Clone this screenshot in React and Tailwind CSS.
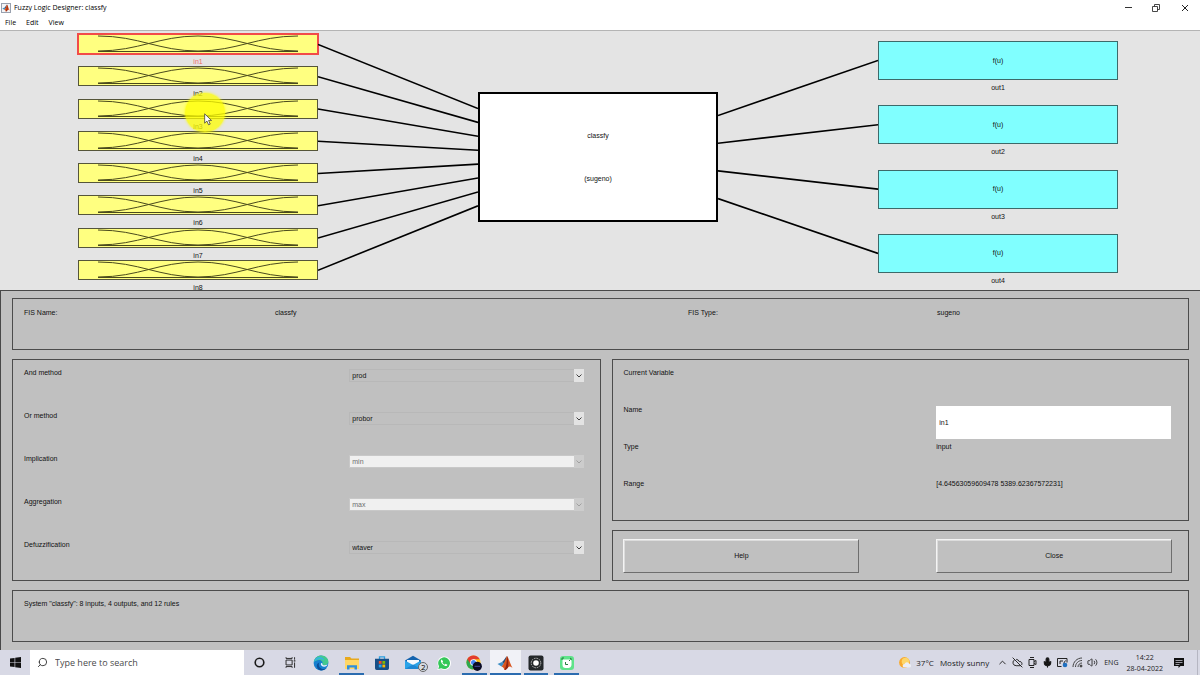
import { useState } from "react"
import { ChevronUp, CloudOff, Mic, Volume2, Search } from "lucide-react"

const INPUTS = ["in1", "in2", "in3", "in4", "in5", "in6", "in7", "in8"]
const OUTPUTS = ["out1", "out2", "out3", "out4"]

const METHODS = [
  { label: "And method", id: "and", options: ["prod", "min"] },
  { label: "Or method", id: "or", options: ["probor", "max"] },
  { label: "Implication", id: "implication", options: ["min"], disabled: true },
  { label: "Aggregation", id: "aggregation", options: ["max"], disabled: true },
  { label: "Defuzzification", id: "defuzz", options: ["wtaver", "wtsum"] },
]

function MatlabLogo({ className }) {
  return (
    <svg viewBox="0 0 32 32" className={className} aria-hidden="true">
      <path d="M1 18 L10 14 L14 17 L9 23 Z" fill="#3f8fc4" />
      <path d="M10 14 C14 12 16 5 20 2 C18 10 16 18 9 23 L14 17 Z" fill="#244f7c" />
      <path d="M20 2 C24 7 26 18 31 26 C27 23 25 22 22 25 C19 29 17 30 15 30 C14 26 12 24 9 23 C15 18 17 8 20 2 Z" fill="#d9541e" />
      <path d="M20 2 C23 8 23 18 22 25 C19 29 17 30 15 30 C19 22 20 12 20 2 Z" fill="#8f2413" />
    </svg>
  )
}

function TitleBar() {
  return (
    <header className="bg-white font-['Open_Sans','Noto_Sans',sans-serif] text-black">
      <div className="flex h-[15px] items-center">
        <div className="ml-px flex h-[10px] w-[10px] items-center justify-center border border-gray-400 bg-gray-100">
          <MatlabLogo className="h-2 w-2" />
        </div>
        <h1 className="ml-[3px] flex-1 text-[7px] leading-[10px]">Fuzzy Logic Designer: classfy</h1>
        <button type="button" aria-label="Minimize" className="flex w-7 justify-center">
          <svg viewBox="0 0 8 8" className="h-2 w-2" stroke="#333" fill="none">
            <path d="M1 3.5h7" />
          </svg>
        </button>
        <button type="button" aria-label="Restore" className="flex w-7 justify-center">
          <svg viewBox="0 0 8 8" className="h-2 w-2" stroke="#333" fill="none" strokeWidth=".9">
            <path d="M.5 2.500h5v5h-5z M2.500 2.500v-2h5v5h-2" />
          </svg>
        </button>
        <button type="button" aria-label="Close window" className="flex w-[30px] justify-center">
          <svg viewBox="0 0 8 8" className="h-2 w-2" stroke="#222" fill="none">
            <path d="M1 1l6 6M7 1l-6 6" />
          </svg>
        </button>
      </div>
      <nav className="flex h-4 items-center gap-[10px] border-b border-[#b4b4b4] pl-[5px] text-[7px] leading-[10px]">
        <button type="button">File</button>
        <button type="button">Edit</button>
        <button type="button">View</button>
      </nav>
    </header>
  )
}

function InputNode({ name, selected, onSelect }) {
  return (
    <button type="button" onClick={onSelect} className="flex flex-col">
      <span
        className={
          selected
            ? "block h-5 w-full border border-[#f24b48] bg-[#ffff80] outline outline-[#f24b48]"
            : "block h-5 w-full border border-[#55553a] bg-[#ffff80]"
        }
      >
        <svg viewBox="0 0 238 18" preserveAspectRatio="none" className="block h-full w-full" fill="none" stroke="#4a4a1c">
          <path d="M19 1 C60 1 80 16 119 16 C158 16 178 1 219 1" vectorEffect="non-scaling-stroke" />
          <path d="M19 16 C60 16 80 1 119 1 C158 1 178 16 219 16" vectorEffect="non-scaling-stroke" />
          <path d="M19 16.5H219" vectorEffect="non-scaling-stroke" />
        </svg>
      </span>
      <span className={selected ? "mt-1 w-full text-center leading-2 text-[#ee6a6a]" : "mt-1 w-full text-center leading-2"}>
        {name}
      </span>
    </button>
  )
}

function OutputNode({ name }) {
  return (
    <div className="flex flex-col text-center">
      <div className="flex h-[39px] items-center justify-center border border-[#3c6a6a] bg-[#80ffff]">f(u)</div>
      <div className="mt-1 leading-2">{name}</div>
    </div>
  )
}

// Lines that join the variable boxes to the rule block
function Edges({ lines }) {
  return (
    <svg viewBox="0 0 160 259" preserveAspectRatio="none" className="h-[259px] w-full" stroke="#000" strokeWidth="1.6">
      {lines.map(([from, to]) => (
        <line key={`${from}-${to}`} x1="0" y1={from} x2="160" y2={to} vectorEffect="non-scaling-stroke" />
      ))}
    </svg>
  )
}

function Diagram({ names, current, onSelect }) {
  const left = INPUTS.map((_, i) => [13.5 + i * 32.25, 77.5 + i * 13.9])
  const right = OUTPUTS.map((_, i) => [84.5 + i * 27.7, 29.5 + i * 64.3])

  return (
    <section className="relative grid h-[259px] grid-cols-[78fr_240fr_160fr_240fr_160fr_240fr_82fr] overflow-hidden bg-[#e4e4e4] text-[7px] leading-2">
      <div className="col-start-2 mt-[3px] grid h-[258px] grid-rows-8">
        {names.map((name, i) => (
          <InputNode key={INPUTS[i]} name={name} selected={i === current} onSelect={() => onSelect(i)} />
        ))}
      </div>
      <Edges lines={left} />
      <div className="mt-[61px] flex h-[130px] flex-col items-center justify-center gap-[35px] border-2 border-black bg-white">
        <span>classfy</span>
        <span>(sugeno)</span>
      </div>
      <Edges lines={right} />
      <div className="mt-[10px] grid h-[257px] grid-rows-4">
        {OUTPUTS.map((name) => (
          <OutputNode key={name} name={name} />
        ))}
      </div>
      {/* Pointer highlight */}
      <div className="pointer-events-none absolute top-[62px] left-[185px] h-[39px] w-10 rounded-full bg-[#ffff00]/75 shadow-[0_0_3px_#ffff00]" />
      <svg viewBox="0 0 12 19" className="pointer-events-none absolute top-[82px] left-[204px] h-[13px] w-2">
        <path d="M1 1v14l3.400-3.200 2.400 5.600 2.500-1-2.400-5.500h4.400z" fill="#fff" stroke="#222" />
      </svg>
    </section>
  )
}

function MethodSelect({ id, options, disabled }) {
  return (
    <div className="relative mt-[9px] h-[13px]">
      <select
        id={id}
        disabled={disabled}
        className={
          disabled
            ? "block h-[13px] w-full appearance-none border border-[#c8c8c8] bg-[#f0f0f0] pl-[2px] leading-[11px] text-[#6d6d6d] opacity-100"
            : "block h-[13px] w-full appearance-none border border-[#b8b8b8] bg-[#c0c0c0] pl-[2px] leading-[11px]"
        }
      >
        {options.map((option) => (
          <option key={option}>{option}</option>
        ))}
      </select>
      <span
        className={
          disabled
            ? "pointer-events-none absolute top-0 right-0 flex h-[13px] w-[10px] items-center justify-center bg-[#cccccc] text-[#a0a0a0]"
            : "pointer-events-none absolute top-0 right-0 flex h-[13px] w-[10px] items-center justify-center bg-[#e3e3e3] text-[#404040]"
        }
      >
        <svg viewBox="0 0 6 4" className="h-1 w-[6px]" fill="none" stroke="currentColor">
          <path d="M.5 .5L3 3L5.500 .5" />
        </svg>
      </span>
    </div>
  )
}

function Panel({ className, children }) {
  return <section className={`border border-[#4c4c4c] ${className}`}>{children}</section>
}

const PUSH_BUTTON =
  "h-[34px] border border-t-[#f4f4f4] border-l-[#f4f4f4] border-r-[#6e6e6e] border-b-[#6e6e6e] text-center shadow-[inset_1px_1px_0_#dcdcdc]"

function Controls({ currentName, onRename }) {
  return (
    <main className="flex flex-1 flex-col gap-[9px] border-t border-l border-[#484848] bg-[#c0c0c0] pt-[7px] pr-[11px] pb-2 pl-[11px] text-[7px] leading-2">
      <Panel className="grid min-h-[52px] grid-cols-[251fr_413fr_249fr_240fr] pt-[10px] pr-[11px] pl-[11px]">
        <span>FIS Name:</span>
        <span>classfy</span>
        <span>FIS Type:</span>
        <span>sugeno</span>
      </Panel>

      <div className="grid grid-cols-[590fr_577fr] gap-[11px]">
        <Panel className="grid min-h-[222px] auto-rows-[43px] grid-cols-[325fr_235fr] pr-4 pl-[11px]">
          {METHODS.map((method) => (
            <div key={method.id} className="contents">
              <label htmlFor={method.id} className="pt-[9px]">
                {method.label}
              </label>
              <MethodSelect {...method} />
            </div>
          ))}
        </Panel>

        <div className="flex flex-col gap-[9px]">
          <Panel className="grid flex-1 auto-rows-[37px] grid-cols-[313fr_235fr] pt-[9px] pr-[17px] pl-[10px]">
            <h2 className="col-span-2">Current Variable</h2>
            <label htmlFor="var-name">Name</label>
            <input
              id="var-name"
              type="text"
              value={currentName}
              onChange={(e) => onRename(e.target.value)}
              className="h-[33px] w-full bg-white px-[3px]"
            />
            <span>Type</span>
            <span>input</span>
            <span>Range</span>
            <span>[4.64563059609478 5389.62367572231]</span>
          </Panel>
          <Panel className="grid min-h-[51px] grid-cols-[236fr_77fr_236fr] items-center pr-4 pl-[10px]">
            <button type="button" className={PUSH_BUTTON}>
              Help
            </button>
            <button type="button" className={`col-start-3 ${PUSH_BUTTON}`}>
              Close
            </button>
          </Panel>
        </div>
      </div>

      <Panel className="min-h-[52px] pt-[9px] pl-[11px]">
        <p role="status">System "classfy": 8 inputs, 4 outputs, and 12 rules</p>
      </Panel>
    </main>
  )
}

const APPS = [
  {
    name: "Cortana",
    icon: <circle cx="8" cy="8" r="5.3" fill="none" stroke="#1a1a1a" strokeWidth="2" />,
  },
  {
    name: "Task view",
    icon: (
      <g fill="none" stroke="#2a2a2a" strokeWidth="1.2">
        <path d="M2.500 5h7.500v6h-7.500z M2.500 1.500v1.500h7.500V1.500 M2.500 14.500V13h7.500v1.500 M13 1.500v3 M13 8v6.500" />
        <path d="M12 6h2" strokeWidth="1.600" />
      </g>
    ),
  },
  {
    name: "Edge",
    icon: (
      <>
        <circle cx="8" cy="8" r="7.4" fill="#1780cf" />
        <path d="M.8 7C1.6 2.800 4.800.6 8.200.6c4.300 0 7.200 3 7.200 6 0 2.400-1.800 3.700-3.800 3.700-1.500 0-2.300-.5-2.100-1.300.6-2.300-.9-4.100-3.500-4.100C3.500 4.900 1.800 6 .8 7z" fill="#43c98e" />
        <path d="M.8 7C1.600 3.500 4.500 1.600 7.600 2c2.400.4 3.700 2 3.500 4C9.800 4.200 7.500 3.800 5.500 4.400 3.200 5 1.800 6 .8 7z" fill="#35b5dc" />
        <path d="M6.400 7.400c-1.800 2.900.6 6.600 4.300 6.700 1.300 0 2.400-.4 3.300-1-1.500 1.700-3.600 2.400-6 2.400-3-.6-4.600-3.200-4.200-5.200.2-1.500 1.300-2.500 2.600-2.900z" fill="#0c4f99" />
        <path d="M9.500 9c-.2.800.6 1.300 2.100 1.300 1.200 0 2.200-.4 2.900-1.100-.3 1.400-1.500 2.500-3.300 2.500-2.200 0-3.500-1.200-3.400-2.600.1-1.200 1.500-1.400 1.700-.1z" fill="#eaf3fa" />
      </>
    ),
  },
  {
    name: "File Explorer",
    running: true,
    icon: (
      <>
        <path d="M1 2h5l1.500 1.600H15V14H1z" fill="#e8a91d" />
        <path d="M1 5h14v9H1z" fill="#ffd766" />
        <path d="M3 14.500v-4.200h10v4.200h-2.500v-2h-5v2z" fill="#2f8fdb" />
      </>
    ),
  },
  {
    name: "Microsoft Store",
    icon: (
      <>
        <path d="M5.500 4V1.800h5V4" fill="none" stroke="#2a9fe0" strokeWidth="1.300" />
        <path d="M1 3.700h14v9.600a1.700 1.700 0 0 1-1.700 1.700H2.700A1.700 1.700 0 0 1 1 13.300z" fill="#174f87" />
        <path d="M4.800 6h2.800v2.800H4.800z" fill="#ef4e2a" />
        <path d="M8.400 6h2.800v2.800H8.400z" fill="#7fba00" />
        <path d="M4.800 9.600h2.800v2.800H4.800z" fill="#29a8ec" />
        <path d="M8.400 9.600h2.800v2.800H8.400z" fill="#ffb900" />
      </>
    ),
  },
  {
    name: "Mail",
    badge: "2",
    icon: (
      <>
        <path d="M0 5.500L8 .8l8 4.700v8.500H0z" fill="#1463ae" />
        <path d="M2 5h12v5H2z" fill="#f5f9fd" />
        <path d="M0 5.500l8 4.500 8-4.500V14H0z" fill="#2aa3e8" />
        <path d="M0 14l8-4.500 8 4.500z" fill="#1c87d4" />
      </>
    ),
  },
  {
    name: "WhatsApp",
    icon: (
      <>
        <path d="M1.400 15l1-3.600A6.700 6.700 0 1 1 5 14z" fill="#fff" />
        <path d="M2.300 14.100l.8-2.800a5.900 5.900 0 1 1 2.100 2z" fill="#35c759" />
        <path d="M5.800 4.600c-.9.400-1.100 1.300-.8 2.200.8 2 2.300 3.500 4.300 4.200 1 .3 1.900-.2 2.100-1.200l-1.800-1-.8.900c-1.100-.5-1.900-1.300-2.400-2.300l.7-.8z" fill="#fff" />
      </>
    ),
  },
  {
    name: "Chrome",
    running: true,
    icon: (
      <>
        <circle cx="7.500" cy="7.500" r="7" fill="#fbc116" />
        <path d="M1.300 4.100A7 7 0 0 0 7.200 14.500l2.700-5.400z" fill="#2da94f" />
        <path d="M1.300 4.100A7 7 0 0 1 13.700 4.200H7.500L4.600 9z" fill="#e33b2e" />
        <circle cx="7.500" cy="7.500" r="3.300" fill="#fff" />
        <circle cx="7.500" cy="7.500" r="2.500" fill="#4285f4" />
        <circle cx="11.300" cy="11.300" r="4.600" fill="#0b0b24" />
        <path d="M8.500 11.300h5.600" stroke="#4a4a9a" />
      </>
    ),
  },
  { name: "MATLAB", running: true, active: true },
  {
    name: "Recorder",
    running: true,
    icon: (
      <>
        <rect x=".5" y=".5" width="15" height="15" rx="2" fill="#23272a" />
        <circle cx="8" cy="8" r="4.800" fill="none" stroke="#bbb" strokeDasharray="1.500 1" />
        <circle cx="8" cy="8" r="2.800" fill="#fff" />
      </>
    ),
  },
  {
    name: "Camtasia",
    running: true,
    icon: (
      <>
        <rect x="1" y="1" width="14" height="14" rx="3" fill="#5fe38a" />
        <path d="M4 4.500h7a1.500 1.500 0 0 1 1.500 1.500v4A3.500 3.500 0 0 1 9 13H6.500A3 3 0 0 1 3.500 10V5z" fill="#fff" />
        <path d="M6.500 7v2.500H9M3 5V3h2M11 3l2 1.500M10 6l1.500-1.500" stroke="#25803f" fill="none" />
      </>
    ),
  },
]

function AppButton({ app }) {
  return (
    <button
      type="button"
      aria-label={app.name}
      className={
        app.active
          ? "relative flex items-center justify-center bg-[#f1f2f7]"
          : "relative flex items-center justify-center"
      }
    >
      {app.icon ? (
        <svg viewBox="0 0 16 16" className={app.name === "Cortana" || app.name === "Task view" ? "h-[13px] w-[13px]" : "h-4 w-4"}>
          {app.icon}
        </svg>
      ) : (
        <MatlabLogo className="h-4 w-4" />
      )}
      {app.badge && (
        <span className="absolute right-0 bottom-[3px] flex h-[10px] w-[10px] items-center justify-center rounded-full border border-[#666] bg-[#d5dbe2] text-[8px] leading-2 text-black">
          {app.badge}
        </span>
      )}
      {app.running && (
        <span
          className={
            app.active
              ? "absolute inset-x-0 bottom-0 h-[2px] bg-[#2b6cb0]"
              : "absolute inset-x-[3px] bottom-0 h-[2px] bg-[#2b6cb0]"
          }
        />
      )}
    </button>
  )
}

function Taskbar() {
  return (
    <footer className="flex h-[25px] shrink-0 bg-[#d8d9e5] font-['Open_Sans','Noto_Sans',sans-serif] text-[#1c1c1c]">
      <button type="button" aria-label="Start" className="flex w-[30px] items-center justify-center">
        <svg viewBox="0 0 12 12" className="h-[11px] w-[11px]" fill="#111">
          <path d="M0 1.700l5-.7v4.700H0zM5.700.9L12 0v5.700H5.700zM0 6.400h5V11l-5-.7zM5.700 6.400H12V12l-6.300-.9z" />
        </svg>
      </button>
      <label className="flex w-[214px] items-center bg-white pl-[7px]">
        <Search className="h-[11px] w-[11px] -scale-x-100 text-[#333]" strokeWidth={2} />
        <input
          type="text"
          aria-label="Search"
          placeholder="Type here to search"
          className="ml-[7px] w-40 text-[9px] leading-3 placeholder:text-[#4a4a4a]"
        />
      </label>
      <div className="grid w-[338px] grid-cols-11">
        {APPS.map((app) => (
          <AppButton key={app.name} app={app} />
        ))}
      </div>

      <div className="ml-auto flex items-center">
        <svg viewBox="0 0 14 14" className="h-[13px] w-[13px]">
          <circle cx="7" cy="7" r="5.800" fill="#f9a92b" />
          <circle cx="8" cy="6" r="4" fill="#fdd66a" />
          <path d="M7 12.500a2 2 0 0 1 0-4 2.800 2.800 0 0 1 5.200.2 1.900 1.900 0 0 1 0 3.800z" fill="#eceef5" />
        </svg>
        <span className="ml-[5px] text-[8px] leading-3">37°C</span>
        <span className="ml-[6px] text-[8px] leading-3">Mostly sunny</span>
        <div className="ml-2 flex items-center gap-1">
          <ChevronUp className="h-[11px] w-[11px]" />
          <CloudOff className="h-[11px] w-[11px]" />
          <svg viewBox="0 0 11 11" className="h-[11px] w-[11px]" fill="none" stroke="#222">
            <path d="M2 2.500h5v6H2zM7 4.500l2-1v4l-2-1M3 .5h4M3 10.500h4" />
          </svg>
          <Mic className="h-[11px] w-[11px]" fill="#111" strokeWidth={2.5} />
          <svg viewBox="0 0 11 11" className="h-[11px] w-[11px]" fill="none" stroke="#222">
            <path d="M4.500 9.500h-4v-8h9.500v4M3 7V4h3M6.500 6.500L8.500 3.500" />
            <circle cx="8" cy="8" r="2.300" fill="#1f6fc0" stroke="none" />
          </svg>
          <svg viewBox="0 0 11 11" className="h-[11px] w-[11px]" fill="none" stroke="#444">
            <path d="M1 10C1 5 5 1 10 1M3.500 10C3.500 6.400 6.400 3.500 10 3.500M6 10c0-2.200 1.800-4 4-4" />
            <circle cx="9" cy="9" r="1" fill="#333" />
          </svg>
          <Volume2 className="h-[11px] w-[11px]" strokeWidth={1.8} />
        </div>
        <span className="ml-[6px] text-[7px] leading-3">ENG</span>
        <div className="ml-2 text-center text-[7px] leading-[11px]">
          <div>14:22</div>
          <div>28-04-2022</div>
        </div>
        <svg viewBox="0 0 12 12" className="ml-[10px] h-3 w-3">
          <path d="M1 1h10v8H7.500L5.500 11V9H1z" fill="#111" />
          <path d="M2.500 3.500h7M2.500 5.500h7M2.500 7.500h4" stroke="#d8d9e5" strokeWidth=".7" />
        </svg>
        <div className="mr-[2px] ml-3 h-[25px] w-px bg-[#b5b6c2]" />
      </div>
    </footer>
  )
}

function App() {
  const [current, setCurrent] = useState(0)
  const [names, setNames] = useState(INPUTS)

  const handleRename = (name) => {
    setNames(names.map((old, i) => (i === current ? name : old)))
  }

  return (
    <div className="flex min-h-screen flex-col font-['Liberation_Sans',Arial,sans-serif] text-[#111]">
      <TitleBar />
      <Diagram names={names} current={current} onSelect={setCurrent} />
      <Controls currentName={names[current]} onRename={handleRename} />
      <Taskbar />
    </div>
  )
}

export default App
